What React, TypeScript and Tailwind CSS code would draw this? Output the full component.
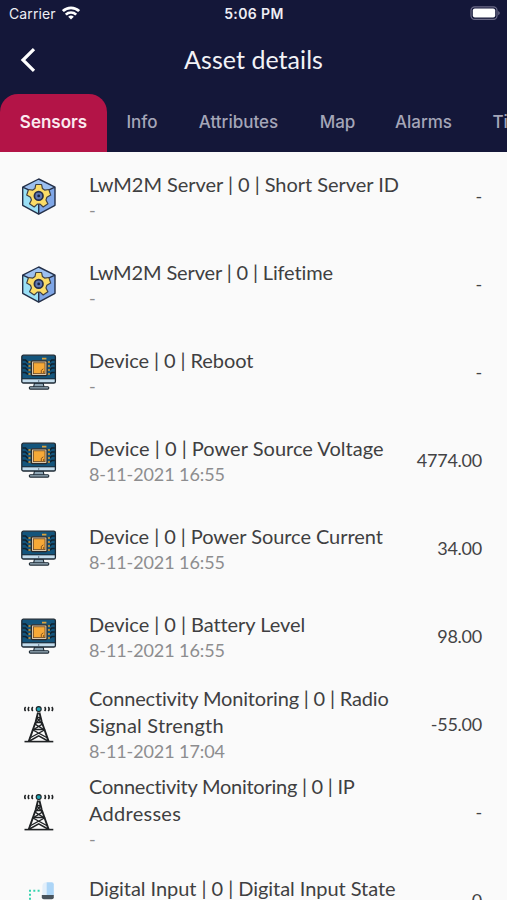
import { clsx } from 'clsx';

type IconKind = 'server' | 'device' | 'tower' | 'input';

interface Sensor {
  icon: IconKind;
  // each entry is one line of the title
  title: { text: string; tracking: string }[];
  time: string;
  value: string;
}

const TABS = [
  { label: 'Sensors', width: 'w-[107px]' },
  { label: 'Info', width: 'w-[70px]' },
  { label: 'Attributes', width: 'w-[123px]' },
  { label: 'Map', width: 'w-[75px]' },
  { label: 'Alarms', width: 'w-[97px]' },
  { label: 'Timeline', width: 'w-[110px]' },
];

const SENSORS: Sensor[] = [
  {
    icon: 'server',
    title: [{ text: 'LwM2M Server | 0 | Short Server ID', tracking: 'tracking-[-0.04px]' }],
    time: '-',
    value: '-',
  },
  {
    icon: 'server',
    title: [{ text: 'LwM2M Server | 0 | Lifetime', tracking: 'tracking-[-0.14px]' }],
    time: '-',
    value: '-',
  },
  {
    icon: 'device',
    title: [{ text: 'Device | 0 | Reboot', tracking: 'tracking-[-0.08px]' }],
    time: '-',
    value: '-',
  },
  {
    icon: 'device',
    title: [{ text: 'Device | 0 | Power Source Voltage', tracking: 'tracking-[0.02px]' }],
    time: '8-11-2021 16:55',
    value: '4774.00',
  },
  {
    icon: 'device',
    title: [{ text: 'Device | 0 | Power Source Current', tracking: 'tracking-[-0.06px]' }],
    time: '8-11-2021 16:55',
    value: '34.00',
  },
  {
    icon: 'device',
    title: [{ text: 'Device | 0 | Battery Level', tracking: 'tracking-[-0.05px]' }],
    time: '8-11-2021 16:55',
    value: '98.00',
  },
  {
    icon: 'tower',
    title: [
      { text: 'Connectivity Monitoring | 0 | Radio', tracking: 'tracking-[-0.17px]' },
      { text: 'Signal Strength', tracking: 'tracking-[0.2px]' },
    ],
    time: '8-11-2021 17:04',
    value: '-55.00',
  },
  {
    icon: 'tower',
    title: [
      { text: 'Connectivity Monitoring | 0 | IP', tracking: 'tracking-[-0.25px]' },
      { text: 'Addresses', tracking: 'tracking-[0.27px]' },
    ],
    time: '-',
    value: '-',
  },
  {
    icon: 'input',
    title: [{ text: 'Digital Input | 0 | Digital Input State', tracking: 'tracking-[-0.05px]' }],
    time: '-',
    value: '0',
  },
];

function ServerIcon() {
  return (
    <svg viewBox="0 0 38 38" className="size-[38px] shrink-0">
      <path d="M18.7 1 35 9.2V27.3L18.7 36.2Z" fill="#7fa6e6" />
      <path d="M18.7 1 2.7 9.2V27.3L18.7 36.2Z" fill="#9be0f6" />
      <path d="M18.7 1 35 9.2 18.7 17.5 2.7 9.2Z" fill="#9cc0f0" />
      <path
        d="M18.7 1 35 9.2V27.3L18.7 36.2 2.7 27.3V9.2ZM2.7 9.2l6 2.6M35 9.2l-6 2.6M18.7 26v10"
        fill="none"
        stroke="#243049"
        strokeWidth="1.4"
        strokeLinejoin="round"
      />
      <path
        d="M-2.9-11.4H2.9L3.7-7.4 5.9-5.8 10.2-6.4 12-.8 8.2 1.4 7.3 4 9.2 7.9 4.5 11.1 1.4 8.2H-1.4L-4.5 11.1-9.2 7.9-7.3 4-8.2 1.4-12-.8-10.2-6.4-5.9-5.8-3.7-7.4Z"
        transform="translate(18.7 17.9)"
        fill="#fbdc67"
        stroke="#3f4043"
        strokeWidth="1.2"
        strokeLinejoin="round"
      />
      <circle cx="18.7" cy="17.9" r="4.3" fill="#6079b4" stroke="#252d48" strokeWidth="1.7" />
      <circle cx="18.7" cy="17.9" r="1.4" fill="#1b2541" />
    </svg>
  );
}

function DeviceIcon() {
  return (
    <svg viewBox="0 0 38 38" className="size-[38px] shrink-0">
      <path d="M14.5 29h8.6l1 4.5h-10.6Z" fill="#8fa6b5" stroke="#1d2933" strokeWidth="1.1" />
      <rect x="9.3" y="32.7" width="19.5" height="2.4" rx="1" fill="#9fb4c2" stroke="#1d2933" strokeWidth="1.1" />
      <rect x="1.8" y="1.2" width="33.6" height="27.8" rx="1.6" fill="#14557c" />
      <path d="M1.8 25h33.6v2.6a1.4 1.4 0 0 1-1.4 1.4H3.2a1.4 1.4 0 0 1-1.4-1.4Z" fill="#c3dcec" />
      <rect x="1.8" y="1.2" width="33.6" height="27.8" rx="1.6" fill="none" stroke="#1d2933" strokeWidth="1.3" />
      <path d="M2 24.8h33.4" stroke="#1d2933" strokeWidth="1" />
      <path
        d="M2.5 6h3l2 2H9M2.5 10h3l2 2H9M2.5 14h3l2 2H9M2.5 18.5h3l2 1.5H9M34.8 6h-3l-2 2h-1M34.8 10h-3l-2 2h-1M34.8 14h-3l-2 2h-1M34.8 18.5h-3l-2 1.5h-1"
        fill="none"
        stroke="#10222f"
        strokeWidth="1.6"
      />
      <path d="M8.4 8h2.2M8.4 12h2.2M8.4 16h2.2M8.4 20h2.2M27.8 8H30M27.8 12H30M27.8 16H30M27.8 20H30M22 4.6h4.4" stroke="#dba33c" strokeWidth="1.6" />
      <rect x="11.4" y="6.8" width="15.6" height="14.8" rx="1" fill="#d9c8ae" stroke="#2b2a2a" strokeWidth="1.2" />
      <rect x="13.4" y="8.8" width="11.6" height="10.8" fill="#f7a937" stroke="#6d4a25" strokeWidth="0.8" />
      <path d="M21.3 19v-2.6l2-1.6M23.7 19v-2" stroke="#7a4c1f" strokeWidth="0.9" fill="none" />
      <circle cx="18.7" cy="27" r="0.7" fill="#45586a" />
    </svg>
  );
}

function TowerIcon() {
  return (
    <svg viewBox="0 0 38 38" className="-mt-0.5 size-[38px] shrink-0" fill="none" stroke="#1f2224">
      <path
        d="M5.6 1.9Q3.8 4 5.6 6.1M9.1 1.9Q7.3 4 9.1 6.1M12.8 1.9Q11 4 12.8 6.1M24.6 1.9Q26.4 4 24.6 6.1M28.3 1.9Q30.1 4 28.3 6.1M31.8 1.9Q33.6 4 31.8 6.1"
        strokeWidth="1.5"
      />
      <path d="M18 7.5 15.6 17 8.8 36.4M19.4 7.5l2.4 9.5 6.8 19.4" strokeWidth="1.9" />
      <path d="M16.8 12.5h3.8M15.5 17.5h6.4M13 24.5h11.4" strokeWidth="1.3" />
      <path d="M16.8 13l5.6 6-9.4 6L27.6 33M20.6 13 15 19l9.4 6L9.8 33" strokeWidth="1.4" />
      <path d="M9.5 36 18.7 30.8 27.9 36" strokeWidth="1.5" />
      <path d="M4.5 36.6h28.8" strokeWidth="1.6" />
      <circle cx="18.7" cy="4.1" r="2.5" fill="#22a5b5" strokeWidth="1.1" />
    </svg>
  );
}

function InputIcon() {
  return (
    <svg viewBox="0 0 38 38" className="size-[38px] shrink-0">
      <path
        d="M9 7.8h2v2H9ZM13.3 7.8h2v2h-2ZM17.6 7.8h2v2h-2ZM9 11.8h2v2H9ZM9 15.8h2v2H9Z"
        fill="#35d3ae"
      />
      <path d="M22.4 13.5V4q0-3.8 4.2-3.8V13.5Z" fill="#e3effa" />
      <path d="M26.6.2h5.2q2 0 2 2v11.3h-7.2Z" fill="#acd5f7" />
      <path d="M21.8 13h12v2.2q0 2-2 2h-8q-2 0-2-2Z" fill="#48525b" />
    </svg>
  );
}

function SensorIcon({ kind }: { kind: IconKind }) {
  if (kind === 'server') return <ServerIcon />;
  if (kind === 'device') return <DeviceIcon />;
  if (kind === 'tower') return <TowerIcon />;
  return <InputIcon />;
}

function StatusBar() {
  return (
    <div className="grid h-7 grid-cols-3 items-center pr-[7px] pl-[9px] font-['Inter',sans-serif] text-[14px] leading-7 text-[#eeeef4]">
      <div className="flex items-center gap-1.5">
        <span className="tracking-[0.1px]">Carrier</span>
        <svg viewBox="0 0 18 14" className="mb-0.5 h-3.5 w-[18px]" fill="none" stroke="#fff" strokeWidth="2.7">
          <path d="M.9 5.1a11.6 11.6 0 0 1 16.2 0" />
          <path d="M3.8 8.6a7.5 7.5 0 0 1 10.4 0" />
          <path d="M9 13.6 6.2 10.8a4 4 0 0 1 5.6 0Z" fill="#fff" stroke="none" />
        </svg>
      </div>
      <span className="pr-px text-center font-semibold tracking-[0.4px]">5:06 PM</span>
      <svg viewBox="0 0 30 14" className="mb-0.5 h-3.5 w-[30px] justify-self-end">
        <rect x="1" y="0.8" width="26" height="12.6" rx="3.6" fill="none" stroke="#6c6b88" strokeWidth="1.2" />
        <rect x="2.8" y="2.6" width="22.4" height="9" rx="2" fill="#fff" />
        <path d="M28.2 5q1.6.8 1.6 2.1T28.2 9.2Z" fill="#6c6b88" />
      </svg>
    </div>
  );
}

function SensorRow({ sensor }: { sensor: Sensor }) {
  return (
    <li className="flex h-[88px] shrink-0 items-center pr-[25px] pl-5">
      <SensorIcon kind={sensor.icon} />
      <div className="ml-[31px] flex-1 pb-0.5 whitespace-nowrap">
        {sensor.title.map((line) => (
          <div key={line.text} className={clsx('text-[20px] leading-[27px] text-[#3f3f41]', line.tracking)}>
            {line.text}
          </div>
        ))}
        <div className="text-[18px] leading-6 tracking-[-0.1px] text-[#8d8d8f]">{sensor.time}</div>
      </div>
      <span className="pb-0.5 text-[18px] leading-6 tracking-[-0.25px] text-[#434345]">{sensor.value}</span>
    </li>
  );
}

export default function App() {
  return (
    <div className="flex h-[900px] w-[507px] flex-col overflow-hidden bg-[#fafafa] font-['Lato',sans-serif]">
      <header className="h-[152px] shrink-0 bg-[#141739]">
        <StatusBar />
        <div className="grid h-[66px] grid-cols-[48px_1fr_48px] items-center pb-0.5">
          <svg viewBox="0 0 16 24" className="ml-5 h-6 w-4" fill="none" stroke="#fff" strokeWidth="3.2">
            <path d="M14 1.2 3 12l11 10.8" />
          </svg>
          <h1 className="text-center text-[25px] tracking-[0.05px] text-[#f2f2f6]">Asset details</h1>
        </div>
        <nav className="flex h-[58px] overflow-hidden font-['Inter',sans-serif]">
          {TABS.map((tab, i) => (
            <button
              key={tab.label}
              className={clsx(
                'flex shrink-0 items-center justify-center text-[17px]',
                tab.width,
                i === 0 ? 'rounded-t-[18px] bg-[#b31447] font-semibold text-[#fbe9ef]' : 'font-medium text-[#a5a6b8]'
              )}
            >
              {tab.label}
            </button>
          ))}
        </nav>
      </header>
      <ul className="flex flex-col pt-px">
        {SENSORS.map((sensor) => (
          <SensorRow key={sensor.title[0].text} sensor={sensor} />
        ))}
      </ul>
    </div>
  );
}
